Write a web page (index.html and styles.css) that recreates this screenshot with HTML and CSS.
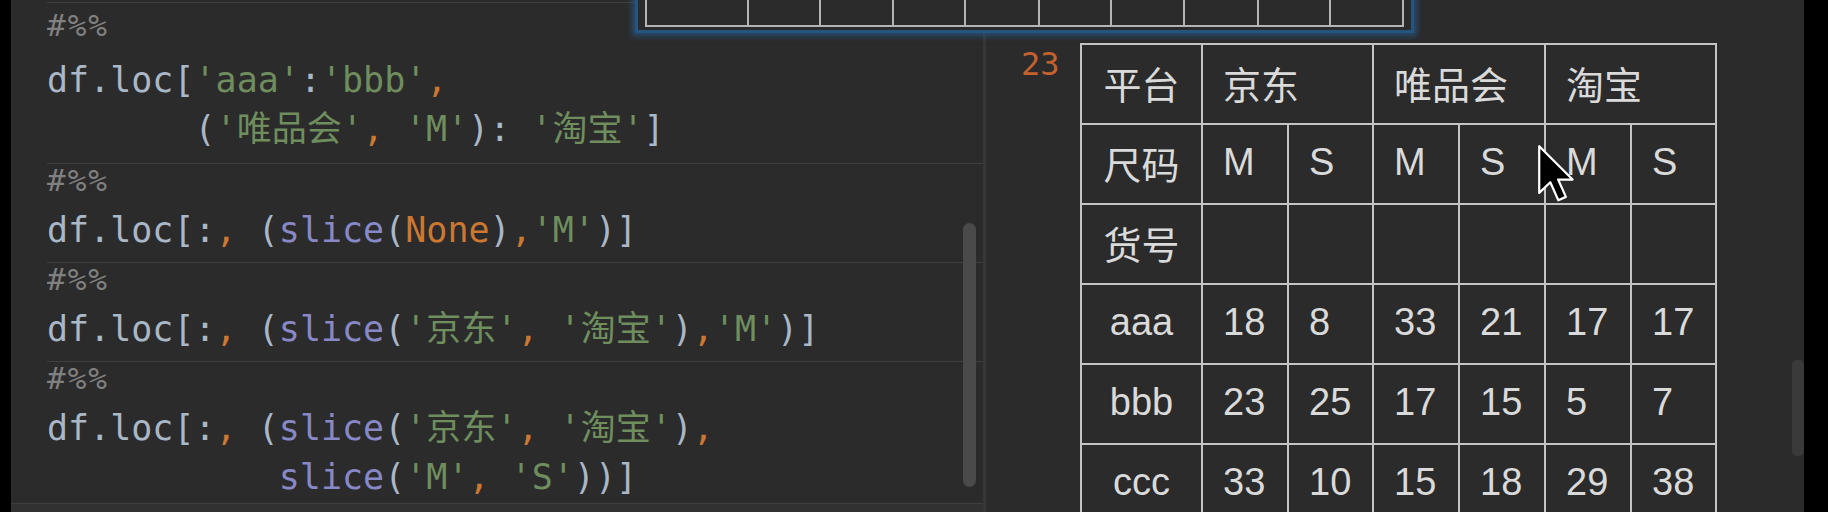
FILE: index.html
```html
<!DOCTYPE html>
<html lang="zh">
<head>
<meta charset="utf-8">
<title>Notebook</title>
<link rel="stylesheet" href="styles.css">
</head>
<body>
<div class="screen">
  <div class="edge-left"></div>

  <div class="editor">
    <div class="cells">
      <div class="cell cell-first">
        <div class="marker">#%%</div>
        <div class="line">df.loc[<span class="s">'aaa'</span>:<span class="s">'bbb'</span><span class="p">,</span></div>
        <div class="line">       (<span class="s">'唯品会'</span><span class="p">,</span> <span class="s">'M'</span>): <span class="s">'淘宝'</span>]</div>
      </div>
      <div class="cell">
        <div class="marker">#%%</div>
        <div class="line">df.loc[:<span class="p">,</span> (<span class="b">slice</span>(<span class="k">None</span>)<span class="p">,</span><span class="s">'M'</span>)]</div>
      </div>
      <div class="cell">
        <div class="marker">#%%</div>
        <div class="line">df.loc[:<span class="p">,</span> (<span class="b">slice</span>(<span class="s">'京东'</span><span class="p">,</span> <span class="s">'淘宝'</span>)<span class="p">,</span><span class="s">'M'</span>)]</div>
      </div>
      <div class="cell">
        <div class="marker">#%%</div>
        <div class="line">df.loc[:<span class="p">,</span> (<span class="b">slice</span>(<span class="s">'京东'</span><span class="p">,</span> <span class="s">'淘宝'</span>)<span class="p">,</span></div>
        <div class="line">           <span class="b">slice</span>(<span class="s">'M'</span><span class="p">,</span> <span class="s">'S'</span>))]</div>
      </div>
    </div>
    <div class="footer"></div>
    <div class="vscroll"></div>
  </div>

  <div class="divider"></div>

  <div class="output">
    <div class="out-row">
      <div class="lineno">23</div>
      <table class="frame">
        <colgroup>
          <col class="c-first"><col class="c86"><col class="c85"><col class="c86"><col class="c86"><col class="c86"><col class="c85">
        </colgroup>
        <tr><th>平台</th><td colspan="2">京东</td><td colspan="2">唯品会</td><td colspan="2">淘宝</td></tr>
        <tr><th>尺码</th><td>M</td><td>S</td><td>M</td><td>S</td><td>M</td><td>S</td></tr>
        <tr><th>货号</th><td></td><td></td><td></td><td></td><td></td><td></td></tr>
        <tr><th>aaa</th><td>18</td><td>8</td><td>33</td><td>21</td><td>17</td><td>17</td></tr>
        <tr><th>bbb</th><td>23</td><td>25</td><td>17</td><td>15</td><td>5</td><td>7</td></tr>
        <tr><th>ccc</th><td>33</td><td>10</td><td>15</td><td>18</td><td>29</td><td>38</td></tr>
      </table>
    </div>
    <div class="out-scroll"></div>
  </div>

  <div class="edge-right"></div>

  <div class="popup">
    <table class="popup-table">
      <colgroup>
        <col class="w102"><col class="w72"><col class="w73"><col class="w72"><col class="w74"><col class="w72"><col class="w73"><col class="w74"><col class="w72"><col class="w73">
      </colgroup>
      <tr><td></td><td></td><td></td><td></td><td></td><td></td><td></td><td></td><td></td><td></td></tr>
    </table>
  </div>

  <svg class="cursor" width="40" height="60" viewBox="0 0 18 27" aria-hidden="true">
    <path d="M1 1 L1 22 L6 17.2 L9.6 25.3 L13 23.8 L9.5 16 L16 16 Z" fill="#000" stroke="#fff" stroke-width="1" stroke-linejoin="round"/>
  </svg>
</div>
</body>
</html>
```

FILE: styles.css
```css
html, body {
  margin: 0;
  padding: 0;
  background: #000;
}

.screen {
  position: relative;
  display: flex;
  width: 1828px;
  height: 512px;
  overflow: hidden;
  background: #2b2b2b;
}

.edge-left {
  flex: none;
  width: 11px;
  background: #000;
}

.edge-right {
  flex: none;
  width: 24px;
  background: #000;
}

/* ---------- editor ---------- */
.editor {
  position: relative;
  flex: none;
  width: 972px;
  display: flex;
  flex-direction: column;
}

.cells {
  flex: 1;
  overflow: hidden;
  padding-top: 2px;
  font-family: "DejaVu Sans Mono", "Noto Sans CJK SC", monospace;
  font-size: 35px;
  color: #a9b7c6;
}

.cell {
  margin-left: 36px;
  border-top: 1px solid #3f3f3f;
  padding-bottom: 7px;
}

.cell-first {
  padding-top: 6px;
  padding-bottom: 9px;
}

.marker {
  font-size: 31px;
  letter-spacing: 2px;
  line-height: 32px;
  margin-bottom: 10px;
  color: #808080;
}

.cell-first .marker {
  margin-bottom: 15px;
}

.line {
  line-height: 49px;
  white-space: pre;
}

.s { color: #6f8e5e; }
.p { color: #cc7832; }
.k { color: #cc7832; }
.b { color: #8888c6; }

.footer {
  flex: none;
  height: 8px;
  border-top: 1px solid #3f3f3f;
  background: #313131;
}

.vscroll {
  position: absolute;
  left: 952px;
  top: 223px;
  width: 13px;
  height: 264px;
  border-radius: 7px;
  background: #4a4a4a;
}

.divider {
  flex: none;
  width: 3px;
  background: #363636;
}

/* ---------- output ---------- */
.output {
  position: relative;
  flex: none;
  width: 818px;
  padding: 43px 0 0 35px;
  box-sizing: border-box;
}

.out-row {
  display: flex;
  align-items: flex-start;
}

.lineno {
  flex: none;
  width: 59px;
  margin-top: 3px;
  font-family: "DejaVu Sans Mono", monospace;
  font-size: 32px;
  line-height: 36px;
  color: #c4612e;
}

.frame {
  flex: none;
  width: 635px;
  table-layout: fixed;
  border-collapse: collapse;
  font-family: "Liberation Sans", "Noto Sans CJK SC", sans-serif;
  font-size: 38px;
  color: #dadada;
}

.frame th,
.frame td {
  height: 74px;
  padding: 0 0 4px 20px;
  border: 2px solid #c4c4c4;
  text-align: left;
  vertical-align: middle;
  font-weight: normal;
  white-space: nowrap;
}

.frame th {
  padding: 0 0 4px 0;
  text-align: center;
}

.c-first { width: 121px; }
.c86 { width: 86px; }
.c85 { width: 85px; }

.out-scroll {
  position: absolute;
  right: 0;
  top: 360px;
  width: 12px;
  height: 96px;
  border-radius: 5px;
  background: #3a3a3a;
}

/* ---------- floating popup ---------- */
.popup {
  position: absolute;
  left: 635px;
  top: -40px;
  padding: 0 7px 3px 7px;
  border: 3px solid #25557f;
  background: #2b2b2b;
  box-shadow: 0 0 6px 3px rgba(38, 92, 145, 0.7);
}

.popup-table {
  width: 757px;
  table-layout: fixed;
  border-collapse: collapse;
}

.popup-table td {
  height: 60px;
  padding: 0;
  border: 2px solid #b4b4b4;
}

.w102 { width: 102px; }
.w72 { width: 72px; }
.w73 { width: 73px; }
.w74 { width: 74px; }

/* ---------- pointer ---------- */
.cursor {
  position: absolute;
  left: 1537px;
  top: 144px;
}
```
